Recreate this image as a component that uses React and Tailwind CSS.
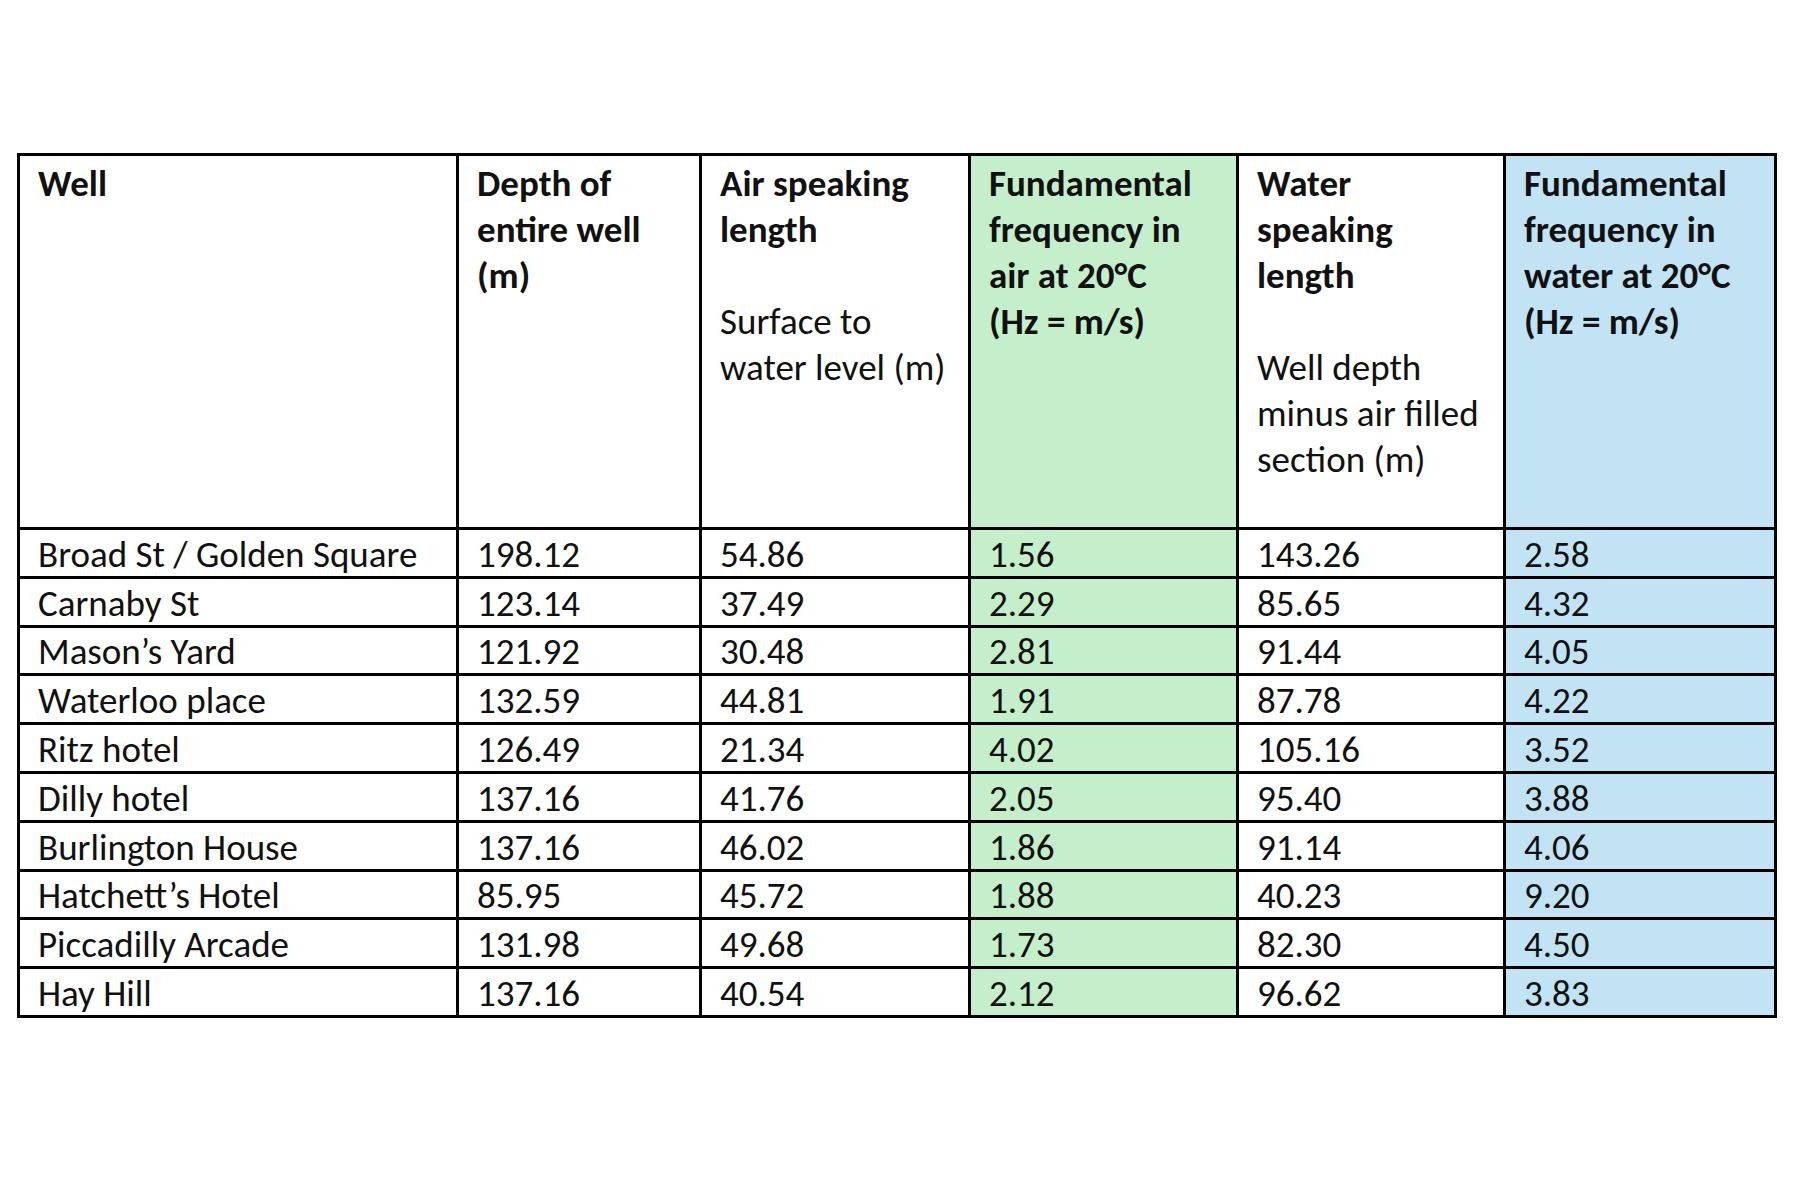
import React from "react";

const rows = [
  ["Broad St / Golden Square", "198.12", "54.86", "1.56", "143.26", "2.58"],
  ["Carnaby St", "123.14", "37.49", "2.29", "85.65", "4.32"],
  ["Mason’s Yard", "121.92", "30.48", "2.81", "91.44", "4.05"],
  ["Waterloo place", "132.59", "44.81", "1.91", "87.78", "4.22"],
  ["Ritz hotel", "126.49", "21.34", "4.02", "105.16", "3.52"],
  ["Dilly hotel", "137.16", "41.76", "2.05", "95.40", "3.88"],
  ["Burlington House", "137.16", "46.02", "1.86", "91.14", "4.06"],
  ["Hatchett’s Hotel", "85.95", "45.72", "1.88", "40.23", "9.20"],
  ["Piccadilly Arcade", "131.98", "49.68", "1.73", "82.30", "4.50"],
  ["Hay Hill", "137.16", "40.54", "2.12", "96.62", "3.83"],
];

const cellBg = ["", "", "", "bg-[#c5efcb]", "", "bg-[#c1e3f4]"];

const th = "border-[3px] border-black align-top text-left font-bold pl-[18px] pr-[10px] pt-[5px] whitespace-nowrap";

const App = () => {
  return (
    <div className="bg-white min-h-screen w-[1800px] h-[1200px] pt-[153px] pl-[17px] font-['Calibri','Carlito','Lato',sans-serif] text-[#111] text-[37px] leading-[46px]">
      <table className="table-fixed border-collapse border-[3px] border-black w-[1760px]">
        <colgroup>
          <col className="w-[439px]" />
          <col className="w-[243px]" />
          <col className="w-[269px]" />
          <col className="w-[268px]" />
          <col className="w-[267px]" />
          <col className="w-[271px]" />
        </colgroup>
        <thead>
          <tr className="h-[374px]">
            <th className={th}>Well</th>
            <th className={th}>
              Depth of<br />entire well<br />(m)
            </th>
            <th className={th}>
              Air speaking<br />length<br /><br />
              <span className="font-normal">Surface to<br />water level (m)</span>
            </th>
            <th className={th + " bg-[#c5efcb]"}>
              Fundamental<br />frequency in<br />air at 20°C<br />(Hz = m/s)
            </th>
            <th className={th}>
              Water<br />speaking<br />length<br /><br />
              <span className="font-normal">Well depth<br />minus air filled<br />section (m)</span>
            </th>
            <th className={th + " bg-[#c1e3f4]"}>
              Fundamental<br />frequency in<br />water at 20°C<br />(Hz = m/s)
            </th>
          </tr>
        </thead>
        <tbody>
          {rows.map((r) => (
            <tr key={r[0]} className="h-[48.8px]">
              {r.map((v, i) => (
                <td
                  key={i}
                  className={"border-[3px] border-black pl-[18px] pr-[10px] pt-[4px] pb-0 leading-[40px] align-middle whitespace-nowrap " + cellBg[i]}
                >
                  {v}
                </td>
              ))}
            </tr>
          ))}
        </tbody>
      </table>
    </div>
  );
};

export default App;
